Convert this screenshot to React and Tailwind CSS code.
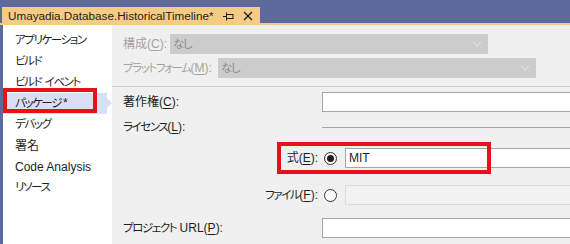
import React from "react";

const font = "[font-family:'Liberation_Sans','Noto_Sans_CJK_JP',sans-serif] [font-feature-settings:'palt']";

function U({ children }) {
  return <span className="underline underline-offset-2">{children}</span>;
}

function J({ t }) {
  const parts = t.split(/([\u3040-\u30FF]+)/);
  return parts.map((p, i) =>
    /[\u3040-\u30FF]/.test(p) ? (
      <span key={i} className="text-[11.5px] tracking-[-1.4px]">{p}</span>
    ) : (
      <span key={i} className={p === "*" ? "ml-[2px]" : ""}>{p}</span>
    )
  );
}

function Chevron() {
  return (
    <svg width="10" height="6" viewBox="0 0 10 6" className="mr-[6px]">
      <polyline points="1,1 5,5 9,1" fill="none" stroke="#dedede" strokeWidth="1.2" />
    </svg>
  );
}

function Dropdown() {
  return (
    <div className="w-[318px] h-[20px] bg-[#cccccc] flex items-center justify-between pl-[3px]">
      <span className="text-[#8c8c8c]"><J t="なし" /></span>
      <Chevron />
    </div>
  );
}

function Radio({ checked }) {
  return (
    <div className="w-[13px] h-[13px] rounded-full border border-[#333333] bg-white flex items-center justify-center shrink-0">
      {checked && <div className="w-[7px] h-[7px] rounded-full bg-[#1e1e1e]" />}
    </div>
  );
}

const items = ["アプリケーション", "ビルド", "ビルド イベント", "パッケージ*", "デバッグ", "署名", "Code Analysis", "リソース"];

export default function App() {
  return (
    <div className={`relative w-[570px] h-[244px] overflow-hidden bg-white flex flex-col text-[12px] text-[#1e1e1e] ${font}`}>
      <div className="h-[23px] bg-[#5c6a9c] flex items-end shrink-0">
        <div className="ml-[2px] w-[258px] h-[16px] bg-[#f5cc84] flex items-center pl-[6px] text-[11.7px] leading-none">
          <span className="mt-[2px]">Umayadia.Database.HistoricalTimeline*</span>
          <svg width="11" height="9" viewBox="0 0 11 9" className="ml-[10px] mt-[2px]">
            <line x1="0" y1="4.5" x2="3" y2="4.5" stroke="#1e1e1e" strokeWidth="1" />
            <line x1="3.5" y1="0.5" x2="3.5" y2="8.5" stroke="#1e1e1e" strokeWidth="1" />
            <rect x="3.5" y="2.5" width="6.5" height="4" fill="none" stroke="#1e1e1e" strokeWidth="1" />
          </svg>
          <svg width="10" height="10" viewBox="0 0 10 10" className="ml-[9px] mt-[2px]">
            <line x1="1" y1="1" x2="9" y2="9" stroke="#1e1e1e" strokeWidth="1.3" />
            <line x1="9" y1="1" x2="1" y2="9" stroke="#1e1e1e" strokeWidth="1.3" />
          </svg>
        </div>
      </div>
      <div className="h-[2px] bg-[#f5cc84] shrink-0" />
      <div className="flex flex-1">
        <div className="w-[112px] shrink-0 border-l-[3px] border-[#5c6a9c] bg-white pt-[5px] flex flex-col">
          {items.map((t, i) => (
            <div
              key={t}
              className={`relative h-[21px] flex items-center pl-[12px] whitespace-pre ${i === 3 ? "bg-[#d9e0f5] mr-[5px]" : ""}`}
            >
              <span><J t={t} /></span>
              {i === 3 && (
                <div className="absolute right-[-5px] top-[5px] w-0 h-0 border-l-[5px] border-l-[#d9e0f5] border-y-[5px] border-y-transparent" />
              )}
            </div>
          ))}
        </div>
        <div className="flex-1 bg-[#f0f0f0] flex flex-col">
          <div className="h-[61px] pt-[9px] pl-[11px] flex flex-col gap-[4px] text-[#a3a3a3]">
            <div className="flex items-center">
              <span className="w-[47px] whitespace-nowrap">構成(<U>C</U>):</span>
              <Dropdown />
            </div>
            <div className="flex items-center">
              <span className="w-[95px] whitespace-nowrap"><J t="プラットフォーム" />(<U>M</U>):</span>
              <Dropdown />
            </div>
          </div>
          <div className="h-px bg-[#cfcfcf]" />
          <div className="flex flex-col">
            <div className="mt-[5px] h-[20px] flex items-center">
              <div className="w-[210px] pl-[11px]">著作権(<U>C</U>):</div>
              <div className="flex-1 h-[20px] bg-white border border-[#a6a6a6] -mr-[4px]" />
            </div>
            <div className="mt-[5px] h-[20px] flex items-center">
              <div className="w-[210px] pl-[11px]"><J t="ライセンス" />(<U>L</U>):</div>
              <div className="flex-1 h-px bg-[#a6a6a6] mt-[1px]" />
            </div>
            <div className="mt-[11px] h-[20px] flex items-center">
              <div className="w-[206px] text-right">式(<U>E</U>):</div>
              <div className="ml-[6px]"><Radio checked /></div>
              <div className="ml-[8px] flex-1 h-[20px] bg-white border border-[#a6a6a6] -mr-[4px] flex items-center pl-[3px]">MIT</div>
            </div>
            <div className="mt-[17px] h-[20px] flex items-center">
              <div className="w-[206px] text-right"><J t="ファイル" />(<U>F</U>):</div>
              <div className="ml-[6px]"><Radio /></div>
              <div className="ml-[8px] flex-1 h-[20px] bg-[#f2f2f2] border border-[#dcdcdc] -mr-[4px]" />
            </div>
            <div className="mt-[13px] h-[20px] flex items-center">
              <div className="w-[210px] pl-[11px] whitespace-pre"><J t="プロジェクト" /> URL(<U>P</U>):</div>
              <div className="flex-1 h-[20px] bg-white border border-[#a6a6a6] -mr-[4px]" />
            </div>
          </div>
        </div>
      </div>
      <div className="absolute left-[3px] top-[88px] w-[94px] h-[25px] border-[4px] border-[#e8101a]" />
      <div className="absolute left-[277px] top-[142px] w-[214px] h-[32px] border-[4px] border-[#e8101a]" />
    </div>
  );
}
